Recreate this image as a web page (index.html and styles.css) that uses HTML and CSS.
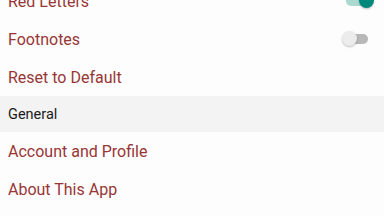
FILE: index.html
```html
<!DOCTYPE html>
<html lang="en">
<head>
    <meta charset="UTF-8">
    <meta name="viewport" content="width=device-width, initial-scale=1.0">
    <title>Settings</title>
    <link rel="stylesheet" href="styles.css">
</head>
<body>

    <div class="settings">
        <div class="row">
            <span class="label">Red Letters</span>
            <span class="switch on"><span class="thumb"></span></span>
        </div>
        <div class="row">
            <span class="label">Footnotes</span>
            <span class="switch"><span class="thumb"></span></span>
        </div>
        <div class="row">
            <span class="label">Reset to Default</span>
        </div>

        <div class="section">General</div>

        <div class="row">
            <span class="label">Account and Profile</span>
        </div>
        <div class="row">
            <span class="label">About This App</span>
        </div>
    </div>

</body>
</html>
```

FILE: styles.css
```css
body {
    font-family: Roboto, "Liberation Sans", sans-serif;
    background-color: #fdfdfd;
    margin: 0;
    padding: 0;
    overflow: hidden;
}

.settings {
    margin-top: -18px;
}

.row {
    height: 38px;
    display: flex;
    align-items: center;
    justify-content: space-between;
    padding: 0 16px 0 8px;
}

.label {
    font-size: 16px;
    color: #983636;
}

.section {
    height: 36px;
    display: flex;
    align-items: center;
    padding-left: 8px;
    font-size: 14.5px;
    color: #1a1a1a;
    background-color: #f3f3f3;
}

.switch {
    position: relative;
    width: 22px;
    height: 10px;
    border-radius: 5px;
    background-color: #b8b8b8;
}

.switch .thumb {
    position: absolute;
    top: -3px;
    left: -4px;
    width: 15px;
    height: 15px;
    border-radius: 50%;
    background-color: #ececec;
    box-shadow: 0 1px 2px rgba(0, 0, 0, 0.25);
}

.switch.on {
    background-color: #a9d9d0;
}

.switch.on .thumb {
    left: auto;
    right: -6px;
    background-color: #00897b;
}
```
